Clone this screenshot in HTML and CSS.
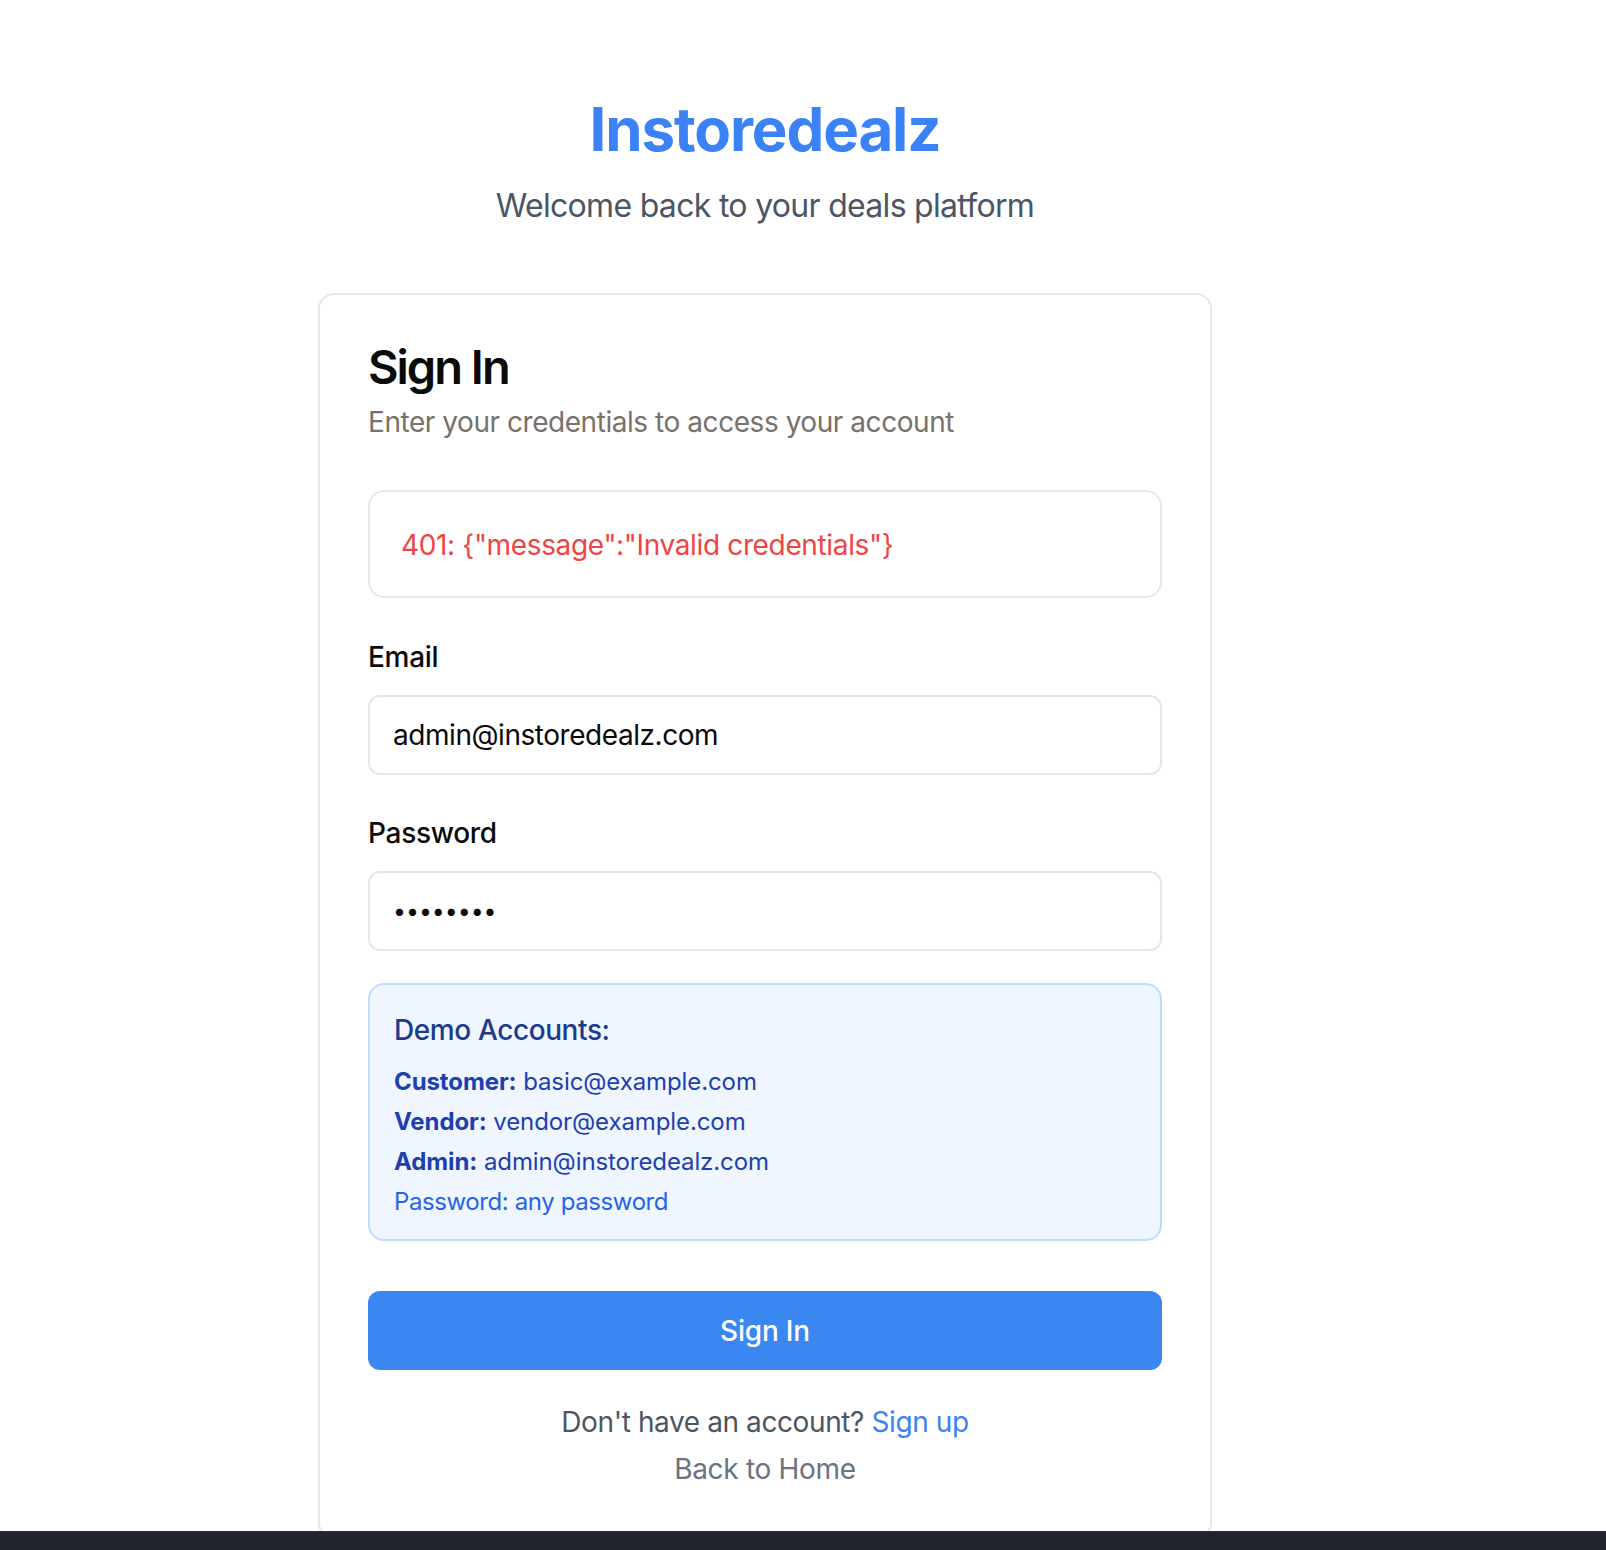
FILE: index.html
```html
<!DOCTYPE html>
<html lang="en">
<head>
<meta charset="utf-8">
<title>Instoredealz - Sign In</title>
<link rel="stylesheet" href="styles.css">
</head>
<body>
<div class="page">
  <header class="brand">
    <h1 class="brand-title">Instoredealz</h1>
    <p class="brand-sub">Welcome back to your deals platform</p>
  </header>

  <section class="card">
    <div class="card-header">
      <h2 class="card-title">Sign In</h2>
      <p class="card-desc">Enter your credentials to access your account</p>
    </div>
    <div class="card-content">
      <div class="alert">401: {"message":"Invalid credentials"}</div>

      <form class="form">
        <label class="label label-email" for="email">Email</label>
        <input class="input" id="email" type="email" value="admin@instoredealz.com">

        <label class="label label-pass" for="password">Password</label>
        <input class="input input-pass" id="password" type="password" value="password">

        <div class="demo">
          <p class="demo-title">Demo Accounts:</p>
          <p class="demo-line"><strong>Customer:</strong> basic@example.com</p>
          <p class="demo-line"><strong>Vendor:</strong> vendor@example.com</p>
          <p class="demo-line"><strong>Admin:</strong> admin@instoredealz.com</p>
          <p class="demo-line demo-note">Password: any password</p>
        </div>

        <button class="btn" type="button">Sign In</button>
      </form>

      <p class="signup">Don't have an account? <a class="link" href="#">Sign up</a></p>
      <p class="back"><a class="back-link" href="#">Back to Home</a></p>
    </div>
  </section>
</div>
<div class="bottom-bar"></div>
</body>
</html>
```
FILE: styles.css
```css
* { box-sizing: border-box; }

html, body {
  margin: 0;
  padding: 0;
  background: #ffffff;
  height: 1550px;
  overflow: hidden;
}

body {
  font-family: "Inter", "Liberation Sans", sans-serif;
  color: #0a0a0a;
}

.page {
  width: 1530px;
  display: flex;
  flex-direction: column;
  align-items: center;
  padding-top: 93px;
}

.brand {
  text-align: center;
}

.brand-title {
  margin: 0 0 17px;
  font-size: 60px;
  line-height: 72px;
  font-weight: 700;
  color: #3b82f6;
  letter-spacing: -1.1px;
}

.brand-sub {
  margin: 0;
  font-size: 32px;
  line-height: 48px;
  color: #4b5563;
  letter-spacing: -0.7px;
}

.card {
  margin-top: 63px;
  width: 894px;
  border: 2px solid #e5e7eb;
  border-radius: 16px;
  background: #ffffff;
}

.card-header {
  padding: 48px 48px 48px;
}

.card-title {
  margin: 0;
  font-size: 47px;
  line-height: 48px;
  font-weight: 600;
  letter-spacing: -2px;
}

.card-desc {
  margin: 11px 0 0;
  font-size: 28px;
  line-height: 40px;
  color: #78716c;
  letter-spacing: -0.45px;
}

.card-content {
  padding: 0 48px 48px;
}

.alert {
  border: 2px solid #e5e7eb;
  border-radius: 16px;
  padding: 33px 31px 31px;
  font-size: 28px;
  line-height: 40px;
  color: #ef4444;
  letter-spacing: -0.35px;
}

.form {
  display: flex;
  flex-direction: column;
}

.label {
  display: block;
  font-size: 28px;
  line-height: 28px;
  font-weight: 500;
  color: #0a0a0a;
  letter-spacing: -0.3px;
}

.label-email { margin-top: 45px; }
.label-pass { margin-top: 44px; }

.input {
  margin-top: 24px;
  width: 100%;
  height: 80px;
  border: 2px solid #e5e7eb;
  border-radius: 12px;
  padding: 0 23px;
  font-family: "Inter", "Liberation Sans", sans-serif;
  font-size: 28px;
  color: #0a0a0a;
  background: #ffffff;
  outline: none;
  letter-spacing: -0.45px;
}

.input-pass {
  letter-spacing: 0;
  font-size: 23px;
}

.demo {
  margin-top: 32px;
  background: #eff6ff;
  border: 2px solid #bfdbfe;
  border-radius: 16px;
  padding: 25px 24px 21px;
}

.demo-title {
  margin: 0 0 16px;
  font-size: 28px;
  line-height: 40px;
  font-weight: 500;
  color: #1e3a8a;
  letter-spacing: -0.4px;
}

.demo-line {
  margin: 0 0 8px;
  font-size: 24px;
  line-height: 32px;
  color: #1e40af;
  letter-spacing: -0.1px;
}

.demo-line strong {
  font-weight: 700;
}

.demo-line.demo-note {
  margin-bottom: 0;
  color: #2563eb;
  letter-spacing: -0.4px;
}

.btn {
  margin-top: 50px;
  width: 100%;
  height: 79px;
  border: none;
  border-radius: 12px;
  background: #3b87f2;
  color: #ffffff;
  font-family: "Inter", "Liberation Sans", sans-serif;
  font-size: 28px;
  font-weight: 500;
  letter-spacing: -0.2px;
  cursor: pointer;
}

.signup {
  margin: 32px 0 0;
  text-align: center;
  font-size: 28px;
  line-height: 40px;
  color: #4b5563;
  letter-spacing: -0.4px;
}

.link {
  color: #3b82f6;
  text-decoration: none;
}

.back {
  margin: 7px 0 0;
  text-align: center;
  font-size: 28px;
  line-height: 40px;
  letter-spacing: -0.3px;
}

.back-link {
  color: #6b7280;
  text-decoration: none;
}

.bottom-bar {
  position: fixed;
  left: 0;
  right: 0;
  bottom: 0;
  height: 19px;
  background: #22252d;
  border-top: 1px solid #2c3039;
}
```
